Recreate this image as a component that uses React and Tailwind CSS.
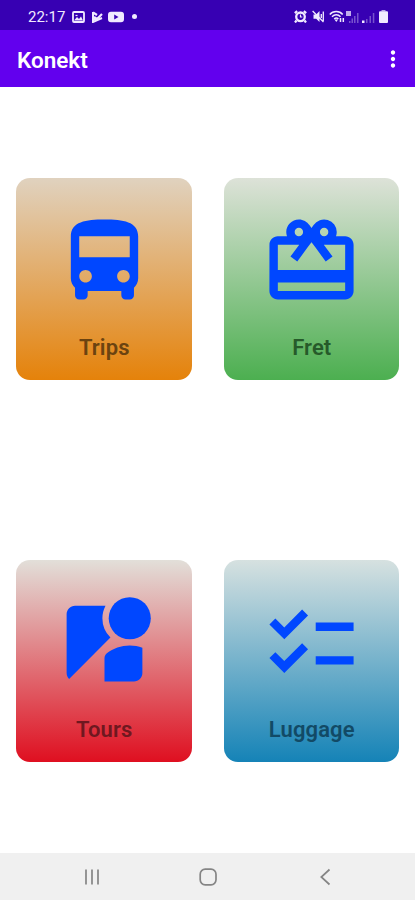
import React from "react";
import {
  MdCardGiftcard,
  MdChecklist,
  MdDirectionsBus,
  MdMoreVert,
  MdStreetview,
} from "react-icons/md";

const cards = [
  { label: "Trips", icon: MdDirectionsBus, bg: "from-[#e0d2bf] to-[#e5820a]", text: "text-[#6b4310]" },
  { label: "Fret", icon: MdCardGiftcard, bg: "from-[#dde2d8] to-[#4caf50]", text: "text-[#265a2a]" },
  { label: "Tours", icon: MdStreetview, bg: "from-[#e2dfd9] to-[#df0f20]", text: "text-[#6f1820]" },
  { label: "Luggage", icon: MdChecklist, bg: "from-[#d6e1e0] to-[#1583b7]", text: "text-[#124a66]" },
];

const StatusBar = () => (
  <div className="h-[30px] shrink-0 bg-[#3700b3] flex items-center justify-between pl-[28px] pr-[27px] pt-[3px] text-[#f0eaff]">
    <div className="flex items-center">
      <span className="w-[38px] text-[15px] leading-none pt-px">22:17</span>
      <svg className="ml-[6px]" width="13" height="12" viewBox="0 0 13 12" fill="none" stroke="currentColor">
        <rect x="1" y="1" width="11" height="10" rx="1" strokeWidth="1.8" />
        <path d="M2 9.5 5 6l2 2 2-2.5 2 4z" fill="currentColor" stroke="none" />
        <path d="M3.5 4.5h2" strokeWidth="1.2" />
      </svg>
      <svg className="ml-[7px]" width="11" height="12" viewBox="0 0 11 12" fill="none" stroke="currentColor">
        <path d="M1 1v10l9-4" strokeWidth="2" />
        <path d="M1 1.5 5 4M2 6l3 2 5-5M1.500 8.500 6 8" strokeWidth="2.2" />
      </svg>
      <svg className="ml-[5px]" width="16" height="12" viewBox="0 0 16 12" fill="currentColor">
        <path
          fillRule="evenodd"
          d="M3 .7h10a3 3 0 0 1 3 3v4.6a3 3 0 0 1-3 3H3a3 3 0 0 1-3-3V3.7a3 3 0 0 1 3-3zM6.2 3.5v5L10.5 6z"
        />
      </svg>
      <span className="ml-[8px] size-[5px] rounded-full bg-current" />
    </div>
    <div className="flex items-center">
      <svg width="13" height="13" viewBox="0 0 13 13" fill="none" stroke="currentColor">
        <circle cx="6.5" cy="6.8" r="4.3" strokeWidth="2.3" />
        <path d="M6.5 4.5V7h1.8" strokeWidth="1.2" />
        <path d="m.8 3.2 2.4-2M12.2 3.2l-2.4-2M2.5 10.500l-1.500 2M10.5 10.5l1.500 2" strokeWidth="2.2" />
      </svg>
      <svg className="ml-[5px]" width="12" height="13" viewBox="0 0 12 13" fill="currentColor">
        <path d="M1.5 4.5h2.700L7.5 1v11L4.2 8.8H1.5z" />
        <path d="M.6 1 11.5 12M9.3 4v4M11.3 1.5V11" stroke="currentColor" strokeWidth="1.3" />
      </svg>
      <svg className="ml-[5px]" width="16" height="13" viewBox="0 0 16 13" fill="none" stroke="currentColor">
        <path d="M.8 4.500C4 .6 10.5.6 13.7 4.5M3 6.8c2.5-2.6 6-2.6 8.5 0M5.2 9c1.5-1.5 2.7-1.5 4.2 0" strokeWidth="1.500" />
        <path d="M5.5 9.5h3.6L7.3 12z" fill="currentColor" stroke="none" />
        <path d="M11.5 8v4M14.3 8v4" strokeWidth="1.5" />
      </svg>
      <svg className="ml-[1px]" width="13" height="14" viewBox="0 0 13 14" fill="currentColor">
        <path d="M0 1h5v5H0z" opacity=".75" />
        <path d="M3 11h1.5v2H3zM5.5 8.5H7V13H5.5zM8 6h1.5v7H8zM11 3h1.5v10H11z" opacity=".35" />
      </svg>
      <svg className="ml-[3px]" width="13" height="14" viewBox="0 0 13 14" fill="currentColor">
        <path d="M0 10.5h2.5V13H0z" />
        <path d="M4 9h1.5v4H4zM7.5 6H9v7H7.5zM10.8 3h1.5v10h-1.5z" opacity=".35" />
      </svg>
      <svg className="ml-[4px]" width="9" height="13" viewBox="0 0 9 13" fill="currentColor">
        <path d="M2.5 0h4v1.5h-4z" opacity=".7" />
        <rect y="1.3" width="9" height="11.7" rx="1" />
      </svg>
    </div>
  </div>
);

const Card = ({ label, icon: Icon, bg, text }) => (
  <button
    className={`h-[202px] rounded-[14px] bg-linear-to-b/srgb flex flex-col items-center pt-[32.5px] pl-px ${bg}`}
  >
    <Icon className="size-[101px] text-[#0047ff]" />
    <span className={`mt-[22px] text-[22px] leading-[28px] font-semibold tracking-[0.1px] ${text}`}>{label}</span>
  </button>
);

const NavBar = () => (
  <div className="h-[47px] shrink-0 bg-[#f0f0f0] grid grid-cols-3 items-center pl-[34px] pr-[32px] text-[#858585]">
    <svg className="justify-self-center" width="18" height="18" viewBox="0 0 18 18" stroke="currentColor" strokeWidth="1.7">
      <path d="M3 1.5v15M9 1.5v15M15 1.5v15" />
    </svg>
    <svg className="justify-self-center" width="18" height="18" viewBox="0 0 18 18" fill="none" stroke="currentColor" strokeWidth="1.7">
      <rect x="1.2" y="1.2" width="15.8" height="15.6" rx="5" />
    </svg>
    <svg className="justify-self-center" width="18" height="18" viewBox="0 0 18 18" fill="none" stroke="currentColor" strokeWidth="1.7">
      <path d="M13.5 1.5 5.3 9l8.2 7.5" />
    </svg>
  </div>
);

const App = () => {
  return (
    <div className="h-screen w-full flex flex-col bg-white font-['Roboto',sans-serif]">
      <StatusBar />
      <header className="h-[57px] shrink-0 bg-[#6200ee] flex items-center justify-between pl-[17px] pr-[9px] text-white">
        <h1 className="text-[22.5px] font-semibold leading-none pt-[4px]">Konekt</h1>
        <MdMoreVert className="size-[26px]" />
      </header>
      <main className="flex-1 grid grid-cols-2 content-start gap-x-[32px] gap-y-[180px] px-[16px] pt-[91px]">
        {cards.map((card) => (
          <Card key={card.label} {...card} />
        ))}
      </main>
      <NavBar />
    </div>
  );
};

export default App;
